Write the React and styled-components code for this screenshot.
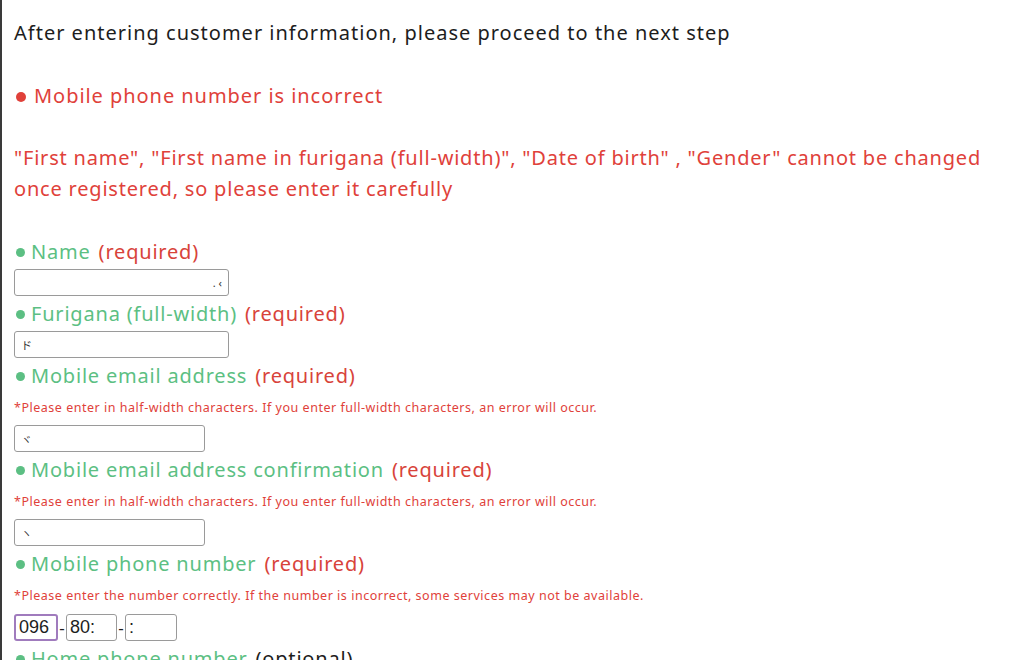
import styled, {createGlobalStyle} from "styled-components"

const Global = createGlobalStyle`
  html, body {
    margin: 0;
    padding: 0;
    background: #fff;
  }
  body {
    font-family: "Noto Sans", "Noto Sans CJK JP", sans-serif;
  }
`

const Page = styled.div`
  box-sizing: border-box;
  border-left: 2px solid #3a3a3a;
  padding: 18px 0 0 12px;
  overflow: hidden;
  height: 660px;
`

const Lead = styled.div`
  font-size: 20px;
  line-height: 30px;
  letter-spacing: 1px;
  color: #1d1d1d;
`

const ErrorLine = styled.div`
  margin-top: 33px;
  font-size: 20px;
  line-height: 30px;
  letter-spacing: 0.95px;
  color: #e0413a;
  display: flex;
  align-items: center;
`

const Dot = styled.span`
  display: inline-block;
  flex: none;
  width: ${p => p.size || 9}px;
  height: ${p => p.size || 9}px;
  border-radius: 50%;
  background: ${p => p.color};
  margin: 2px ${p => p.gap || 5}px 0 2px;
`

const Notice = styled.p`
  margin: 31px 0 0;
  font-size: 20px;
  line-height: 31px;
  letter-spacing: 0.8px;
  color: #e0413a;
  max-width: 995px;
`

const Form = styled.div`
  margin-top: 30px;
  display: flex;
  flex-direction: column;
`

const Label = styled.div`
  display: flex;
  align-items: center;
  height: 34px;
  font-size: 20px;
  letter-spacing: 0.8px;
  color: #5cbf83;
  white-space: nowrap;
`

const Tag = styled.span`
  margin-left: 8px;
  color: ${p => (p.optional ? "#1d1d1d" : "#d8433a")};
`

const Note = styled.div`
  margin: 6px 0 7px;
  font-size: 12.5px;
  line-height: 20px;
  letter-spacing: 0.52px;
  color: #e0413a;
  white-space: nowrap;
`

const Input = styled.div`
  box-sizing: border-box;
  width: ${p => p.width}px;
  height: 27px;
  margin-top: ${p => (p.tight ? 0 : 1)}px;
  border: 1px solid #9a9a9a;
  border-radius: 3px;
  background: #fff;
  display: flex;
  align-items: center;
  justify-content: ${p => (p.end ? "flex-end" : "flex-start")};
  padding: 0 6px;
  font-size: 11px;
  color: #333;
`

const PhoneRow = styled.div`
  display: flex;
  align-items: center;
  margin-top: 1px;
`

const PhoneBox = styled.div`
  box-sizing: border-box;
  width: ${p => p.width}px;
  height: 27px;
  border: ${p => (p.focused ? "2px solid #a07bbd" : "1px solid #9a9a9a")};
  border-radius: 3px;
  display: flex;
  align-items: center;
  padding: 0 3px;
  font-size: 18px;
  color: #1d1d1d;
  font-family: "Liberation Sans", sans-serif;
`

const Dash = styled.span`
  width: 8px;
  text-align: center;
  font-size: 17px;
  color: #1d1d1d;
`

function Field({label, tag = "(required)", optional, note, children}) {
  return (
    <>
      <Label>
        <Dot color="#5cbf83" gap={6} />
        {label}
        <Tag optional={optional}>{tag}</Tag>
      </Label>
      {note && <Note>{note}</Note>}
      {children}
    </>
  )
}

const halfWidth =
  "*Please enter in half-width characters. If you enter full-width characters, an error will occur."

export default function App() {
  return (
    <>
      <Global />
      <Page>
        <Lead>After entering customer information, please proceed to the next step</Lead>
        <ErrorLine>
          <Dot color="#e0413a" size={10} gap={8} />
          Mobile phone number is incorrect
        </ErrorLine>
        <Notice>
          "First name", "First name in furigana (full-width)", "Date of birth" , "Gender" cannot be
          changed once registered, so please enter it carefully
        </Notice>
        <Form>
          <Field label="Name">
            <Input width={215} end>
              . ‹
            </Input>
          </Field>
          <Field label="Furigana (full-width)">
            <Input width={215}>ド</Input>
          </Field>
          <Field label="Mobile email address" note={halfWidth}>
            <Input width={191} tight>
              ヾ
            </Input>
          </Field>
          <Field label="Mobile email address confirmation" note={halfWidth}>
            <Input width={191} tight>
              ヽ
            </Input>
          </Field>
          <Field
            label="Mobile phone number"
            note="*Please enter the number correctly. If the number is incorrect, some services may not be available."
          >
            <PhoneRow>
              <PhoneBox width={44} focused>
                096
              </PhoneBox>
              <Dash>-</Dash>
              <PhoneBox width={51}>80:</PhoneBox>
              <Dash>-</Dash>
              <PhoneBox width={52}>:</PhoneBox>
            </PhoneRow>
          </Field>
          <Field label="Home phone number" tag="(optional)" optional />
        </Form>
      </Page>
    </>
  )
}
